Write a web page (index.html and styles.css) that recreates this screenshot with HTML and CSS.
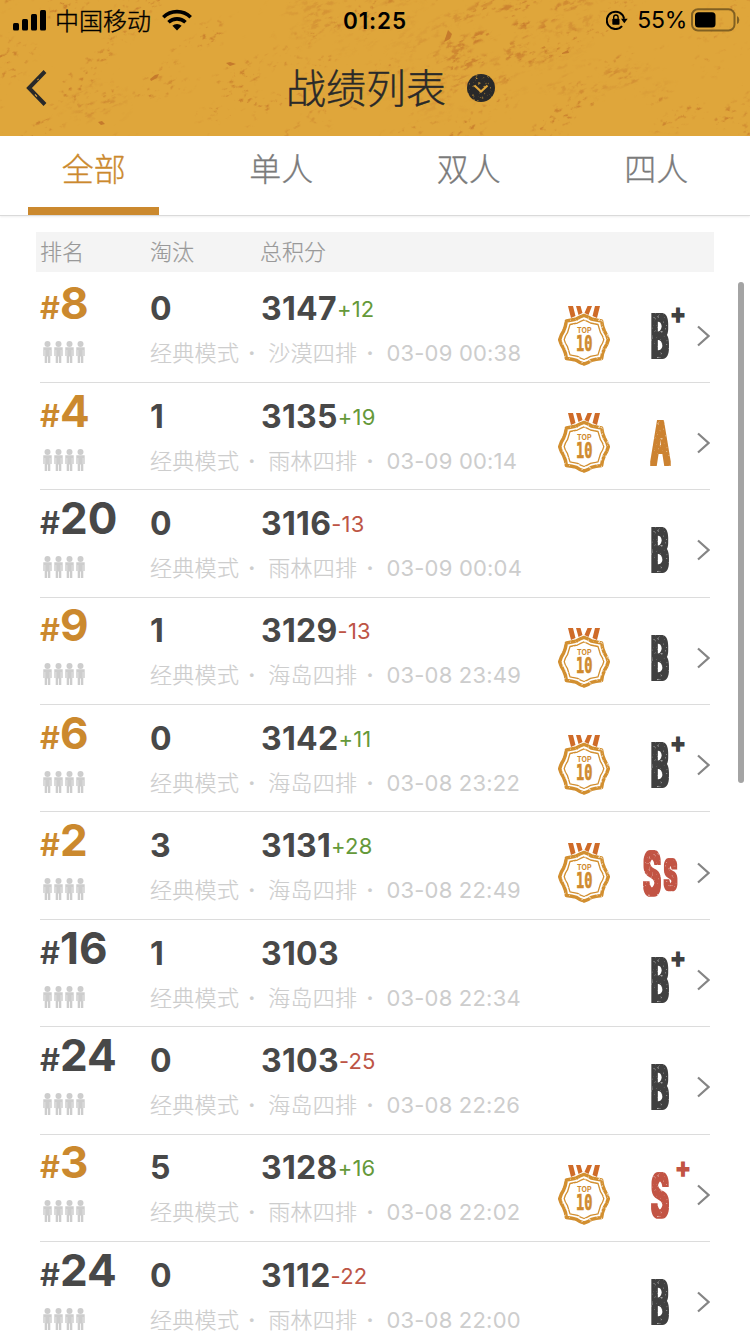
FILE: index.html
```html
<!DOCTYPE html>
<html lang="zh-CN">
<head>
  <meta charset="utf-8">
  <title>战绩列表</title>
  <link rel="stylesheet" href="styles.css">
</head>
<body>

<svg class="defs" width="0" height="0" aria-hidden="true">
  <filter id="worn" x="-5%" y="-5%" width="110%" height="110%" color-interpolation-filters="sRGB">
    <feTurbulence type="fractalNoise" baseFrequency=".35" numOctaves="2" seed="4" result="n"/>
    <feColorMatrix in="n" type="matrix" values="0 0 0 0 0  0 0 0 0 0  0 0 0 0 0  -4 0 0 0 3.500" result="m"/>
    <feComposite in="SourceGraphic" in2="m" operator="in"/>
  </filter>
  <!-- thickens the condensed grade letters and squares their corners -->
  <filter id="stamp" x="-20%" y="-20%" width="140%" height="140%" color-interpolation-filters="sRGB">
    <feMorphology operator="dilate" radius="2 2" result="fat"/>
    <feTurbulence type="fractalNoise" baseFrequency=".35" numOctaves="2" seed="9" result="n"/>
    <feColorMatrix in="n" type="matrix" values="0 0 0 0 0  0 0 0 0 0  0 0 0 0 0  -3 0 0 0 2.950" result="m"/>
    <feComposite in="fat" in2="m" operator="in"/>
  </filter>

  <symbol id="medal" viewBox="0 0 52 60">
    <path fill="#cf6b28" d="M10 0h5l2.500 10-4.500 2zM18 0h4.500l2 7-4 2zM29.500 0h4.500l-3.500 9-4-2zM37 0h5l-3 12-4.500-2z"/>
    <g transform="translate(26 33.700)" fill="none" stroke="#d28f30" stroke-linejoin="round" filter="url(#worn)">
      <path stroke-width="3.500" d="M0-24.300Q4.500-23 7.500-20.700Q12-19.500 17.600-18.800Q18.300-13 20.500-8.500Q23-5 24.300 0Q23 5 20.500 8.500Q18.300 13 17.600 18.800Q12 19.500 7.500 20.700Q4.500 23 0 24.300Q-4.500 23-7.500 20.700Q-12 19.500-17.600 18.800Q-18.300 13-20.500 8.500Q-23 5-24.300 0Q-23-5-20.500-8.500Q-18.300-13-17.600-18.800Q-12-19.500-7.500-20.700Q-4.500-23 0-24.300z"/>
      <path stroke-width="1.300" d="M0-19.800Q3.500-18.500 6.500-16.700L14-15.200L16.500-7Q19-3.500 19.800 0Q19 3.500 16.500 7L14 15.200L6.500 16.700Q3.500 18.500 0 19.800Q-3.500 18.500-6.500 16.700L-14 15.200L-16.500 7Q-19 3.500-19.800 0Q-19-3.500-16.500-7L-14-15.200L-6.500-16.700Q-3.500-18.500 0-19.800z"/>
    </g>
    <g fill="#cf8a2e" stroke="#cf8a2e">
      <text x="19" y="27.400" class="medal-top" textLength="14.500" lengthAdjust="spacing">TOP</text>
      <text x="18" y="45" class="medal-ten" textLength="16.500" lengthAdjust="spacingAndGlyphs">10</text>
    </g>
  </symbol>

  <symbol id="man" viewBox="0 0 9 22">
    <circle cx="4.500" cy="3" r="3"/>
    <path d="M.3 6.300h8.400V15H7.300v7H4.900v-6.500h-.8V22H1.700v-7H.3z"/>
    <path stroke="#fff" stroke-width=".4" d="M1.900 9v6M7.100 9v6"/>
  </symbol>
</svg>

<header class="top">
  <svg class="texture" width="750" height="136" viewBox="0 0 750 136" aria-hidden="true">
    <defs>
      <!-- fine specks, kept only where the coarse noise is high -->
      <filter id="grunge" x="0" y="0" width="100%" height="100%" color-interpolation-filters="sRGB">
        <feTurbulence type="fractalNoise" baseFrequency=".015 .03" numOctaves="3" seed="11"/>
        <feColorMatrix type="matrix" values="0 0 0 0 .78  0 0 0 0 .48  0 0 0 0 .17  6 0 0 0 -3" result="area"/>
        <feTurbulence type="fractalNoise" baseFrequency=".14 .25" numOctaves="4" seed="7"/>
        <feColorMatrix type="matrix" values="0 0 0 0 .78  0 0 0 0 .48  0 0 0 0 .17  7 0 0 0 -4.300" result="fine"/>
        <feComposite in="fine" in2="area" operator="in"/>
      </filter>
      <filter id="dense" x="0" y="0" width="100%" height="100%" color-interpolation-filters="sRGB">
        <feTurbulence type="fractalNoise" baseFrequency=".025 .08" numOctaves="3" seed="23"/>
        <feColorMatrix type="matrix" values="0 0 0 0 .77  0 0 0 0 .46  0 0 0 0 .17  7 0 0 0 -3.200" result="area"/>
        <feTurbulence type="fractalNoise" baseFrequency=".12 .26" numOctaves="4" seed="3"/>
        <feColorMatrix type="matrix" values="0 0 0 0 .77  0 0 0 0 .46  0 0 0 0 .17  8 0 0 0 -4.100" result="fine"/>
        <feComposite in="fine" in2="area" operator="in"/>
      </filter>
      <radialGradient id="spot"><stop offset="0" stop-color="#fff"/><stop offset="1" stop-color="#000"/></radialGradient>
      <mask id="patch">
        <ellipse cx="505" cy="32" rx="145" ry="65" fill="url(#spot)" transform="rotate(-30 505 32)"/>
        <ellipse cx="345" cy="18" rx="90" ry="40" fill="url(#spot)" opacity=".5"/>
        <ellipse cx="600" cy="80" rx="80" ry="22" fill="url(#spot)" opacity=".8"/>
        <ellipse cx="95" cy="105" rx="40" ry="24" fill="url(#spot)" opacity=".7"/>
      </mask>
    </defs>
    <g transform="rotate(-24 375 68)" opacity=".8"><rect x="-60" y="-180" width="870" height="500" filter="url(#grunge)"/></g>
    <g mask="url(#patch)"><g transform="rotate(-24 375 68)"><rect x="-60" y="-180" width="870" height="500" filter="url(#dense)"/></g></g>
    <path fill="#c57a2c" d="M150 79l5-4 4-1-2 4-6 3zM226 63l4-1 6 2-6 2zM445 39l3-9 4 4-2 5-6 3zM98 122l4-1 3 3-4 1zM562 53l6-3 1 3-7 1z"/>
  </svg>

  <div class="status">
    <div class="status-left">
      <svg width="34" height="22" viewBox="0 0 34 22"><rect x="0" y="14" width="6" height="7.500" rx="1.500"/><rect x="9" y="10" width="6" height="11.500" rx="1.500"/><rect x="18" y="5" width="6" height="16.500" rx="1.500"/><rect x="27" y="1" width="6" height="20.500" rx="1.500"/></svg>
      <span class="carrier">中国移动</span>
      <svg width="30" height="22" viewBox="0 0 30 22"><path d="M15 21.500l-4.600-4.700a6.800 6.800 0 0 1 9.200 0z"/><path fill="none" stroke="#000" stroke-width="3.600" d="M1.300 8.200a19.600 19.600 0 0 1 27.400 0M6.500 13.300a12.300 12.300 0 0 1 17 0"/></svg>
    </div>
    <time class="clock">01:25</time>
    <div class="status-right">
      <svg width="22" height="20" viewBox="0 0 22 20"><path fill="none" stroke="#000" stroke-width="2" d="M16.100 16.100a8.700 8.700 0 1 1 2-7.300"/><path d="M15 8.700h6.700l-3.400 4.600z"/><rect x="6.300" y="8.800" width="7.200" height="6" rx=".8"/><path fill="none" stroke="#000" stroke-width="1.400" d="M7.700 9.500V7.200a2.200 2.200 0 0 1 4.400 0v2.300"/></svg>
      <span class="percent">55%</span>
      <svg width="49" height="24" viewBox="0 0 49 24"><rect x="1" y="1.200" width="42.500" height="21.300" rx="6" fill="none" stroke="#000" stroke-opacity=".42" stroke-width="2"/><path fill-opacity=".42" d="M46 8q2.300 1 2.300 4t-2.300 4z"/><rect x="4" y="4.200" width="20.500" height="15.300" rx="3.500"/></svg>
    </div>
  </div>

  <div class="nav">
    <svg class="back" width="21" height="36" viewBox="0 0 21 36"><path fill="none" stroke="#292929" stroke-width="4" d="M19 1.500L3 18l16 16.500"/><path stroke="#dfa63b" stroke-width=".8" d="M9 24l2 3M11 10l2-1M9 25l2 1"/></svg>
    <h1>战绩列表</h1>
    <svg class="more" width="28" height="28" viewBox="0 0 28 28"><circle cx="14" cy="14" r="14" fill="#292929" filter="url(#worn)"/><path fill="none" stroke="#dfa63b" stroke-width="2.200" d="M7.500 11.500l6.500 6 6.500-6"/></svg>
  </div>
</header>

<nav class="tabs">
  <a class="active">全部</a>
  <a>单人</a>
  <a>双人</a>
  <a>四人</a>
</nav>

<main>
  <div class="head"><span>排名</span><span>淘汰</span><span>总积分</span></div>
  <div id="list"></div>
</main>
<div class="scrollbar"></div>

<script>
  // rank, kills, score, delta, map, time, grade
  const games = [
    [8,  0, 3147, '+12', '沙漠四排', '03-09 00:38', 'B+'],
    [4,  1, 3135, '+19', '雨林四排', '03-09 00:14', 'A'],
    [20, 0, 3116, '-13', '雨林四排', '03-09 00:04', 'B'],
    [9,  1, 3129, '-13', '海岛四排', '03-08 23:49', 'B'],
    [6,  0, 3142, '+11', '海岛四排', '03-08 23:22', 'B+'],
    [2,  3, 3131, '+28', '海岛四排', '03-08 22:49', 'Ss'],
    [16, 1, 3103, '',    '海岛四排', '03-08 22:34', 'B+'],
    [24, 0, 3103, '-25', '海岛四排', '03-08 22:26', 'B'],
    [3,  5, 3128, '+16', '雨林四排', '03-08 22:02', 'S+'],
    [24, 0, 3112, '-22', '雨林四排', '03-08 22:00', 'B'],
  ];

  const glyph = (ch, x, y, w, cls = 'letter') =>
    `<text class="${cls}" x="${x}" y="${y}" textLength="${w}" lengthAdjust="spacingAndGlyphs">${ch}</text>`;

  const grades = {
    'B':  glyph('B', 11, 46, 17.5),
    'B+': glyph('B', 11, 46, 17.5) + glyph('+', 29.5, 12.5, 17, 'plus'),
    'A':  glyph('A', 11.5, 46, 18),
    'S+': glyph('S', 11.5, 46, 17) + glyph('+', 34.5, 7.5, 17, 'plus'),
    'Ss': glyph('S', 3.5, 46, 17) + glyph('S', 24.5, 40.5, 12, 'small'),
  };

  const men = [0, 11, 22, 33].map(x => `<use href="#man" x="${x}" width="9" height="22"/>`).join('');

  document.getElementById('list').innerHTML = games.map(([rank, kills, score, delta, map, time, grade]) => `
    <div class="row">
      <div class="rank ${rank <= 10 ? 'top10' : ''}">
        <div class="place"><small>#</small>${rank}</div>
        <svg class="men" width="42" height="22">${men}</svg>
      </div>
      <div class="info">
        <div class="nums">
          <b class="kills">${kills}</b><b>${score}</b><span class="${delta[0] === '+' ? 'up' : 'down'}">${delta}</span>
        </div>
        <div class="meta"><span>经典模式</span><i>·</i><span>${map}</span><i>·</i><time>${time}</time></div>
      </div>
      <div class="medal">${rank <= 10 ? '<svg width="52" height="60"><use href="#medal"/></svg>' : ''}</div>
      <svg class="grade grade-${grade[0]}" width="50" height="50">${grades[grade]}</svg>
      <svg class="go" width="13" height="22" viewBox="0 0 13 22"><path d="M1 1.500L11.500 11 1 20.500"/></svg>
    </div>`).join('');
</script>
</body>
</html>
```
FILE: styles.css
```css
:root { --gold:#cb892e; --dark:#484848; --line:#dcdcdc; --pale:#cdcdcd; }
*{box-sizing:border-box}
body{margin:0;width:750px;height:1334px;overflow:hidden;position:relative;background:#fff;
     font-family:Inter,"Noto Sans CJK SC",sans-serif;color:var(--dark)}
svg{display:block;flex:none}
.defs{position:absolute}

.top{position:relative;height:136px;background:#dfa63b;overflow:hidden}
.texture{position:absolute;left:0;top:0}
.status{position:relative;display:grid;grid-template-columns:1fr auto 1fr;align-items:center;
        height:40px;padding:0 10px 0 13px;color:#000}
.status-left,.status-right{display:flex;align-items:center}
.status-right{justify-content:flex-end}
.carrier{margin:0 11px 0 8px;font:300 24px/40px "Noto Sans CJK SC",sans-serif;-webkit-text-stroke:.4px}
.clock{margin-right:3px;font-size:22.500px;font-weight:600;letter-spacing:.9px}
.percent{margin:0 4px 0 9px;font-size:23px;letter-spacing:-.3px}

.nav{position:relative;display:flex;align-items:center;height:96px}
.back{margin-left:26px}
h1{margin:-4px 0 0 239px;font:300 40px/96px "Noto Sans CJK SC",sans-serif;color:#292929;-webkit-text-stroke:.4px}
.more{margin-left:21px}

.tabs{display:grid;grid-template-columns:repeat(4,1fr);height:80px;border-bottom:1px solid #dadada;
      box-shadow:0 1px 2px #0001}
.tabs a{display:flex;flex-direction:column;align-items:center;
        font:300 32px/62px "Noto Sans CJK SC",sans-serif;color:#7b7b7b;-webkit-text-stroke:.3px}
.tabs .active{color:var(--gold)}
.active::after{content:"";width:131px;height:8px;margin-top:auto;background:var(--gold)}

main{padding:16px 36px 0}
.head{display:grid;grid-template-columns:110px 110px 1fr;height:40px;padding-left:4px;
      background:#f4f4f4;font:300 22px/37px "Noto Sans CJK SC",sans-serif;color:#999;-webkit-text-stroke:.2px}
#list{padding:3.500px 4px 0}
.row{display:flex;align-items:center;height:107.400px;padding-top:14px;border-bottom:1px solid var(--line)}
.rank{width:110px;height:93px}
.place{height:54px;margin-top:-13px;font-size:44px;line-height:54px;font-weight:700;white-space:nowrap}
.place small{font-size:31px;font-weight:600}
.top10 .place{color:var(--gold)}
.men{margin:11px 0 0 3px;fill:var(--pale)}
.info{width:408px;height:93px}
.nums{display:flex;align-items:baseline;height:45px;line-height:40.500px}
.nums b{font-size:32px;font-weight:700;letter-spacing:.3px}
.nums .kills{width:111px}
.nums span{position:relative;top:-3px;font-size:22px;letter-spacing:.2px}
.up{color:#65993a}
.down{color:#bd5546}
.meta{display:flex;height:40px;font:300 22px/38.500px Inter,"Noto Sans CJK SC",sans-serif;
      letter-spacing:.3px;color:var(--pale);-webkit-text-stroke:.2px}
.meta i{width:29px;font-style:normal;font-weight:600;padding-left:9px}
.meta time{font-weight:400;letter-spacing:.2px;-webkit-text-stroke:0}
.medal{width:82px}
.grade{overflow:visible}
.grade text{filter:url(#stamp)}
.letter{font:400 58px/1 Inter,sans-serif}
.small{font:400 40px/1 Inter,sans-serif}
.grade .plus{font:900 29px/1 Inter,sans-serif;filter:none}
.grade-B{fill:#404040}
.grade-A{fill:#cc8230}
.grade-S{fill:#c25444}
.go{margin-left:auto;fill:none;stroke:#858585;stroke-width:2.200}
.medal-top{font:700 7px Inter,sans-serif;stroke:none}
.medal-ten{font:700 22px "DejaVu Sans Mono",monospace;stroke-width:.6px}

.scrollbar{position:absolute;right:6px;top:282px;width:6px;height:501px;border-radius:3px;background:#a4a4a4}
```
